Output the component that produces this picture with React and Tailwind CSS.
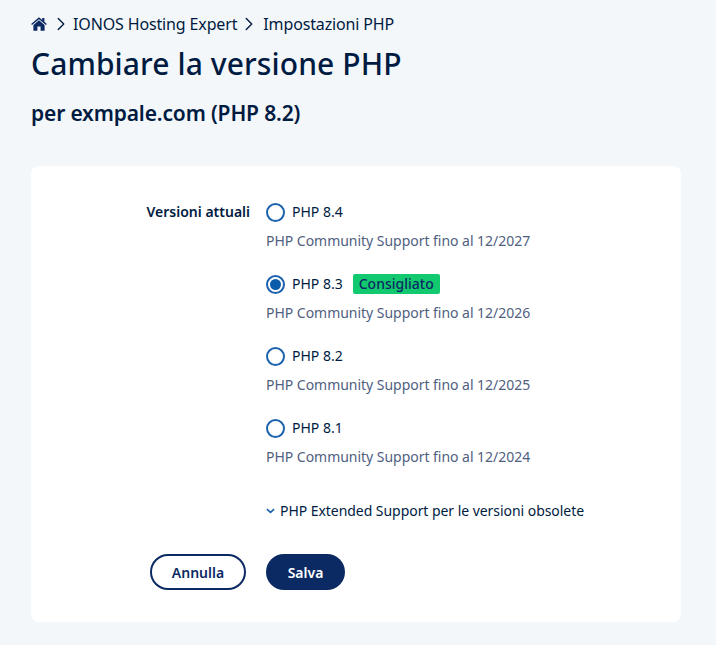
import React from 'react';
import { ChevronRight } from 'lucide-react';

const versions = [
  { name: 'PHP 8.4', support: '12/2027' },
  { name: 'PHP 8.3', support: '12/2026', checked: true, badge: 'Consigliato' },
  { name: 'PHP 8.2', support: '12/2025' },
  { name: 'PHP 8.1', support: '12/2024' },
];

const Radio = ({ checked }) => (
  <span className="w-[19px] h-[19px] rounded-full border-2 border-[#1d62ad] bg-white flex items-center justify-center shrink-0">
    {checked && <span className="w-[11px] h-[11px] rounded-full bg-[#0b5cab]" />}
  </span>
);

export default function App() {
  return (
    <div className="w-[716px] h-[645px] overflow-hidden bg-[#f4f7fa] text-[#001b41] font-['Noto_Sans',sans-serif]">
      <div className="pl-[31px] pt-[14px]">
        <nav className="flex items-center h-[20px] text-[16px] leading-[20px] tracking-[-0.14px]">
          <svg viewBox="0 0 16 14" className="w-[16px] h-[14px] text-[#0b2a63]" fill="currentColor">
            <path d="M8 0.2 L0.1 7 L1 8.1 L8 2.2 L15 8.1 L15.9 7 L13.4 4.8 V1 H11.2 V2.9 Z" />
            <path d="M8 3.3 L2.4 8 V13.8 H6.4 V9.6 H9.6 V13.8 H13.6 V8 Z" />
          </svg>
          <ChevronRight className="w-[22px] h-[22px] ml-[3px] mr-[1px]" strokeWidth={1.5} />
          <span>IONOS Hosting Expert</span>
          <ChevronRight className="w-[22px] h-[22px] ml-[1px] mr-[3px]" strokeWidth={1.5} />
          <span>Impostazioni PHP</span>
        </nav>
        <h1 className="mt-[8px] text-[30px] leading-[44px] font-medium tracking-[0.1px]">Cambiare la versione PHP</h1>
        <h2 className="mt-[13px] text-[21px] leading-[28px] font-semibold tracking-[-0.15px]">per exmpale.com (PHP 8.2)</h2>
      </div>

      <div className="ml-[31px] mt-[39px] w-[650px] h-[456px] bg-white rounded-[8px] pt-[36px]">
        <div className="flex">
          <div className="w-[235px] pr-[16px] text-right text-[14px] leading-[20px] font-semibold">Versioni attuali</div>
          <div className="flex-1">
            <div className="flex flex-col gap-[24px]">
              {versions.map((v) => (
                <div key={v.name}>
                  <div className="flex items-center h-[20px]">
                    <Radio checked={v.checked} />
                    <span className="ml-[7px] text-[14px] leading-[20px]">{v.name}</span>
                    {v.badge && (
                      <span className="ml-[10px] px-[6px] h-[20px] rounded-[2px] bg-[#12c96f] text-[14px] leading-[20px] font-medium text-[#0b2a63]">{v.badge}</span>
                    )}
                  </div>
                  <p className="mt-[10px] text-[14px] leading-[18px] text-[#4f6080] tracking-[-0.03px]">PHP Community Support fino al {v.support}</p>
                </div>
              ))}
            </div>
            <div className="flex items-center mt-[35px] h-[20px] text-[14px] leading-[20px] tracking-[-0.05px]">
              <svg viewBox="0 0 10 6" className="w-[9px] h-[6px] mr-[5px]" fill="none" stroke="#1d62ad" strokeWidth="1.8">
                <path d="M1 1 L5 4.6 L9 1" />
              </svg>
              <span>PHP Extended Support per le versioni obsolete</span>
            </div>
          </div>
        </div>
        <div className="flex mt-[33px] pl-[119px] gap-[20px]">
          <button className="w-[96px] h-[36px] rounded-full border-2 border-[#0b2a63] bg-white text-[14px] font-semibold text-[#0b2a63]">Annulla</button>
          <button className="w-[79px] h-[36px] rounded-full bg-[#0b2a63] text-[14px] font-semibold text-white">Salva</button>
        </div>
      </div>
    </div>
  );
}
